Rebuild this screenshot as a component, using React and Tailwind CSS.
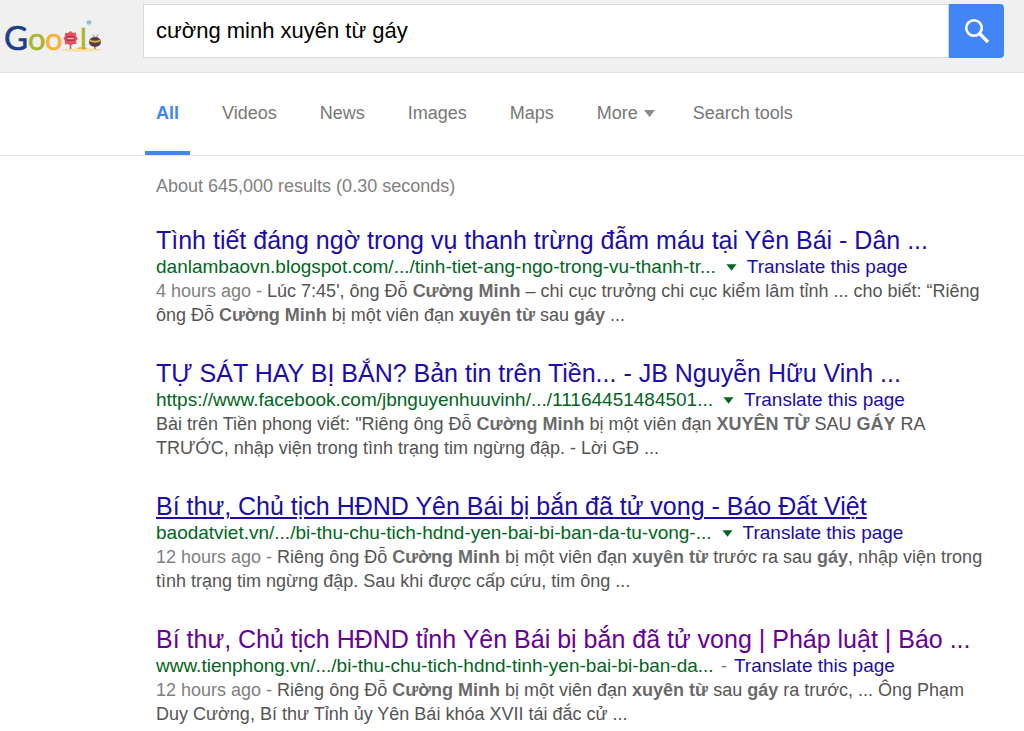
import React, { useState } from "react";

const tabs = ["All", "Videos", "News", "Images", "Maps"];

const results = [
  {
    title: "Tình tiết đáng ngờ trong vụ thanh trừng đẫm máu tại Yên Bái - Dân ...",
    url: "danlambaovn.blogspot.com/.../tinh-tiet-ang-ngo-trong-vu-thanh-tr...",
    menu: true,
    age: "4 hours ago",
    snippet: (
      <>
        Lúc 7:45', ông Đỗ <B>Cường Minh</B> – chi cục trưởng chi cục kiểm lâm tỉnh ... cho biết: “Riêng
        ông Đỗ <B>Cường Minh</B> bị một viên đạn <B>xuyên từ</B> sau <B>gáy</B> ...
      </>
    ),
  },
  {
    title: "TỰ SÁT HAY BỊ BẮN? Bản tin trên Tiền... - JB Nguyễn Hữu Vinh ...",
    url: "https://www.facebook.com/jbnguyenhuuvinh/.../11164451484501...",
    menu: true,
    snippet: (
      <>
        Bài trên Tiền phong viết: "Riêng ông Đỗ <B>Cường Minh</B> bị một viên đạn <B>XUYÊN TỪ</B> SAU{" "}
        <B>GÁY</B> RA TRƯỚC, nhập viện trong tình trạng tim ngừng đập. - Lời GĐ ...
      </>
    ),
  },
  {
    title: "Bí thư, Chủ tịch HĐND Yên Bái bị bắn đã tử vong - Báo Đất Việt",
    url: "baodatviet.vn/.../bi-thu-chu-tich-hdnd-yen-bai-bi-ban-da-tu-vong-...",
    menu: true,
    underlined: true,
    age: "12 hours ago",
    snippet: (
      <>
        Riêng ông Đỗ <B>Cường Minh</B> bị một viên đạn <B>xuyên từ</B> trước ra sau <B>gáy</B>, nhập viện
        trong tình trạng tim ngừng đập. Sau khi được cấp cứu, tim ông ...
      </>
    ),
  },
  {
    title: "Bí thư, Chủ tịch HĐND tỉnh Yên Bái bị bắn đã tử vong | Pháp luật | Báo ...",
    url: "www.tienphong.vn/.../bi-thu-chu-tich-hdnd-tinh-yen-bai-bi-ban-da...",
    visited: true,
    age: "12 hours ago",
    snippet: (
      <>
        Riêng ông Đỗ <B>Cường Minh</B> bị một viên đạn <B>xuyên từ</B> sau <B>gáy</B> ra trước, ... Ông Phạm
        Duy Cường, Bí thư Tỉnh ủy Yên Bái khóa XVII tái đắc cử ...
      </>
    ),
  },
];

function B({ children }) {
  return <b className="font-bold text-[#6a6a6a]">{children}</b>;
}

function Logo() {
  return (
    <svg width="104" height="44" viewBox="0 -6 104 44" role="img" aria-label="Google">
      {/* sand */}
      <path d="M57 30 Q66 28 74 29 Q80 26 85 28.500 L97 29 V30.500 Q78 32.500 57 31Z" fill="#fbdfa6" />
      <path d="M72 29 Q77 25 84 29Z" fill="#f6b73c" />
      <g fontFamily="Lato, sans-serif">
        <text x="0" y="30" fontSize="33" fill="#1d3f8a" stroke="#1d3f8a" strokeWidth="0.600">G</text>
        <text x="24" y="30" fontSize="31" fill="#a9b42c" stroke="#a9b42c" strokeWidth="0.600">o</text>
        <text x="41" y="30" fontSize="31" fill="#f9b234" stroke="#f9b234" strokeWidth="0.600">o</text>
        <text x="76" y="29" fontSize="29" fill="#a9b42c" stroke="#a9b42c" strokeWidth="0.500">l</text>
      </g>
      {/* red character */}
      <path d="M66.500 25 V29" stroke="#8c7a55" strokeWidth="1.500" />
      <path
        d="M61 13 L64 13 L66.500 11 L69 13 L72 12.500 L72 16 L74 18.500 L72 21 L72.500 24 L69 24 L66.500 26 L64 24 L61 24.500 L61 21 L59.500 18.500 L61 16Z"
        fill="#e8505f"
      />
      <rect x="62.500" y="16" width="8" height="5" rx="1" fill="#b53346" />
      <path d="M63.500 18.500 H69.500" stroke="#f6c3c3" strokeWidth="1.500" />
      {/* balloon */}
      <ellipse cx="85" cy="2.500" rx="2.600" ry="2.200" fill="#8fc3c6" />
      <path d="M85 4 V6" stroke="#c9dedf" strokeWidth="1" />
      {/* beetle */}
      <path d="M89 14.500 L91 18 M94 14.500 L92 18" stroke="#8e8a80" strokeWidth="1" />
      <path d="M91 26 V29" stroke="#8e8a80" strokeWidth="1.500" />
      <ellipse cx="91" cy="22" rx="6" ry="5" fill="#5c3a4b" />
      <path d="M85.500 20.500 Q91 23 96.500 20.500" stroke="#c9bd3a" strokeWidth="1.800" fill="none" />
    </svg>
  );
}

function SearchIcon() {
  return (
    <svg width="26" height="26" viewBox="0 0 26 26" fill="none" stroke="#fff" aria-hidden="true">
      <circle cx="10" cy="10" r="7.800" strokeWidth="2.600" />
      <path d="M15.500 15.500 L24 24" strokeWidth="3.400" />
    </svg>
  );
}

function Result({ item }) {
  return (
    <article>
      <h3 className="text-[25px] leading-[29px]">
        <a
          href="#"
          className={
            (item.visited ? "text-[#609] " : "text-[#1a0dab] ") +
            (item.underlined ? "underline decoration-2 underline-offset-2" : "hover:underline")
          }
        >
          {item.title}
        </a>
      </h3>
      <div className="flex items-center text-[19px] leading-6">
        <cite className="not-italic text-[#006621]">{item.url}</cite>
        {item.menu ? (
          <button type="button" aria-label="Result options" className="mx-2.5">
            <svg width="11" height="7" viewBox="0 0 12 7" aria-hidden="true">
              <path d="M0.500 0 H11.500 L6 7Z" fill="#006621" />
            </svg>
          </button>
        ) : (
          <span className="mx-[7px] text-[#808080]">-</span>
        )}
        <a href="#" className="text-[#1a0dab] hover:underline">
          Translate this page
        </a>
      </div>
      <p className="text-lg leading-6 text-[#545454]">
        {item.age && <span className="text-[#808080]">{item.age} - </span>}
        {item.snippet}
      </p>
    </article>
  );
}

export default function App() {
  const [query, setQuery] = useState("cường minh xuyên từ gáy");

  return (
    <div className="min-h-screen overflow-hidden bg-white font-['Liberation_Sans',Arial,sans-serif]">
      <header className="flex border-b border-[#e3e3e3] bg-[#f0f0f0] pt-1 pr-5 pb-3.5">
        <a href="#" className="w-[143px] shrink-0 pt-2.5 pl-1">
          <Logo />
        </a>
        <form className="flex flex-1" onSubmit={(e) => e.preventDefault()}>
          <input
            type="text"
            aria-label="Search"
            value={query}
            onChange={(e) => setQuery(e.target.value)}
            className="h-[54px] min-w-0 flex-1 border border-[#d9d9d9] bg-white px-3 text-[22px] text-black outline-none"
          />
          <button
            type="submit"
            aria-label="Search"
            className="flex w-[55px] items-center justify-center rounded-r-sm bg-[#4285f4]"
          >
            <SearchIcon />
          </button>
        </form>
      </header>

      <nav className="flex gap-[21px] border-b border-[#e5e5e5] pl-[145px] text-lg leading-6 text-[#777]">
        {tabs.map((tab) => (
          <a
            key={tab}
            href="#"
            className={
              "border-b-4 px-[11px] pt-7 pb-[26px] " +
              (tab === "All" ? "border-[#4285f4] font-bold text-[#4285f4]" : "border-transparent")
            }
          >
            {tab}
          </a>
        ))}
        <button type="button" className="flex items-center gap-1.5 border-b-4 border-transparent pt-7 pb-[26px] pl-[11px]">
          More
          <svg width="11" height="7" viewBox="0 0 11 7" aria-hidden="true">
            <path d="M0 0 H11 L5.500 7Z" fill="#8a8a8a" />
          </svg>
        </button>
        <button type="button" className="border-b-4 border-transparent pt-7 pb-[26px] pl-[17px]">
          Search tools
        </button>
      </nav>

      <main className="max-w-[984px] pl-[156px]">
        <p className="pt-[18px] text-lg leading-6 text-[#808080]">About 645,000 results (0.30 seconds)</p>
        <div className="mt-7 flex flex-col gap-8">
          {results.map((item) => (
            <Result key={item.url} item={item} />
          ))}
        </div>
      </main>
    </div>
  );
}
